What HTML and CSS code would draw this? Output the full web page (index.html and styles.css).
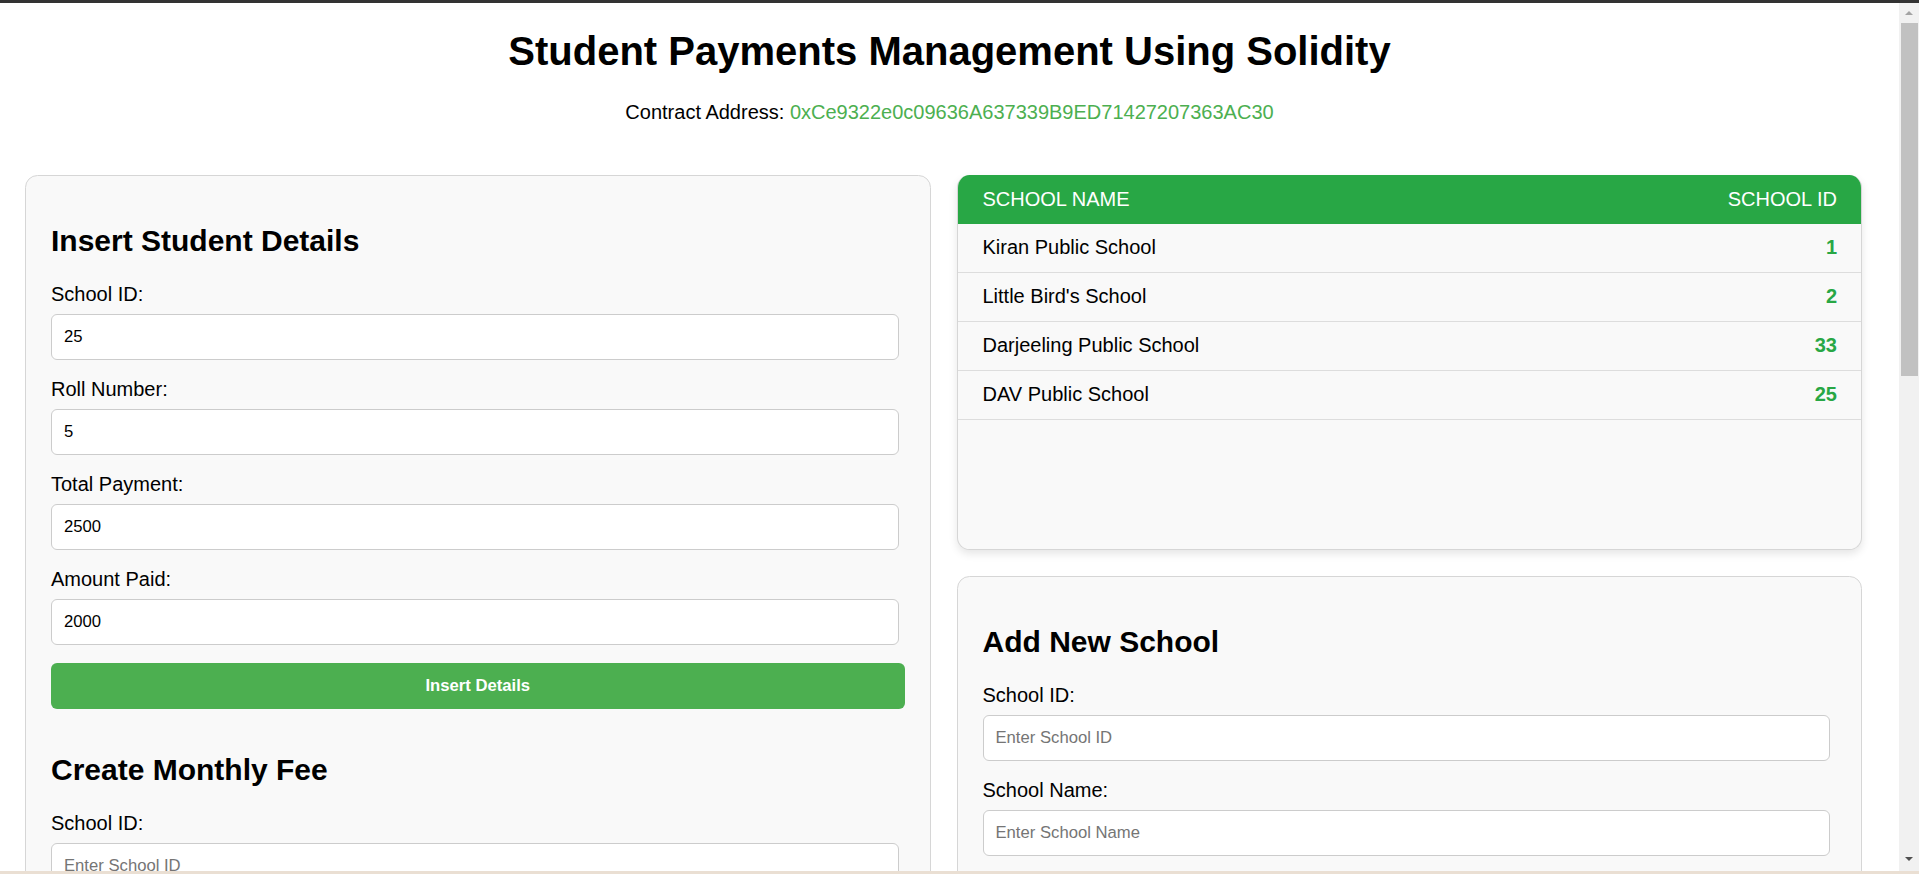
FILE: index.html
```html
<!DOCTYPE html>
<html lang="en">
<head>
<meta charset="utf-8">
<title>Student Payments Management Using Solidity</title>
<link rel="stylesheet" href="styles.css">
</head>
<body>
<div class="window">
  <div class="frame-top"></div>
  <div class="main-row">
    <div class="viewport">
      <div class="page">
        <header class="header">
          <h1 class="title">Student Payments Management Using Solidity</h1>
          <p class="contract">Contract Address: <span class="addr">0xCe9322e0c09636A637339B9ED71427207363AC30</span></p>
        </header>
        <main class="columns">
          <section class="card">
            <div class="form-block">
              <h2 class="card-title">Insert Student Details</h2>
              <label class="field-label">School ID:</label>
              <input class="field" type="text" value="25">
              <label class="field-label">Roll Number:</label>
              <input class="field" type="text" value="5">
              <label class="field-label">Total Payment:</label>
              <input class="field" type="text" value="2500">
              <label class="field-label">Amount Paid:</label>
              <input class="field" type="text" value="2000">
              <button class="btn" type="button">Insert Details</button>
            </div>
            <div class="form-block">
              <h2 class="card-title">Create Monthly Fee</h2>
              <label class="field-label">School ID:</label>
              <input class="field" type="text" placeholder="Enter School ID">
              <label class="field-label">Roll Number:</label>
              <input class="field" type="text" placeholder="Enter Roll Number">
              <label class="field-label">Month:</label>
              <input class="field" type="text" placeholder="Enter Month">
              <label class="field-label">Amount:</label>
              <input class="field" type="text" placeholder="Enter Amount">
              <button class="btn" type="button">Create Fee</button>
            </div>
          </section>
          <div class="side">
            <div class="table-wrap">
              <table class="schools">
                <thead>
                  <tr><th class="col-name">SCHOOL NAME</th><th class="col-id">SCHOOL ID</th></tr>
                </thead>
                <tbody>
                  <tr><td class="col-name">Kiran Public School</td><td class="col-id">1</td></tr>
                  <tr><td class="col-name">Little Bird's School</td><td class="col-id">2</td></tr>
                  <tr><td class="col-name">Darjeeling Public School</td><td class="col-id">33</td></tr>
                  <tr><td class="col-name">DAV Public School</td><td class="col-id">25</td></tr>
                </tbody>
              </table>
            </div>
            <section class="card">
              <div class="form-block">
                <h2 class="card-title">Add New School</h2>
                <label class="field-label">School ID:</label>
                <input class="field" type="text" placeholder="Enter School ID">
                <label class="field-label">School Name:</label>
                <input class="field" type="text" placeholder="Enter School Name">
                <button class="btn" type="button">Add School</button>
              </div>
            </section>
          </div>
        </main>
      </div>
    </div>
    <div class="scrollbar" aria-hidden="true">
      <div class="sb-btn sb-btn-up"><span class="sb-arrow-up"></span></div>
      <div class="sb-track"><div class="sb-thumb"></div></div>
      <div class="sb-btn sb-btn-down"><span class="sb-arrow-down"></span></div>
    </div>
  </div>
  <div class="frame-bottom"></div>
</div>
</body>
</html>
```

FILE: styles.css
```css
html, body {
  margin: 0;
  height: 100%;
  overflow: hidden;
}

body {
  font-family: "Liberation Sans", Arial, sans-serif;
  font-size: 20px;
  color: #000;
  background: #fff;
}

.window {
  display: flex;
  flex-direction: column;
  height: 100vh;
}

.frame-top {
  flex: none;
  height: 3px;
  background: #333;
}

.frame-bottom {
  flex: none;
  height: 3px;
  background: #eadfd3;
}

.main-row {
  flex: 1;
  min-height: 0;
  display: flex;
}

.viewport {
  flex: 1;
  min-width: 0;
  overflow: hidden;
}

/* browser scrollbar of the captured window */
.scrollbar {
  flex: none;
  width: 20px;
  display: flex;
  flex-direction: column;
  background: #f1f1f1;
}

.sb-btn {
  flex: none;
  height: 20px;
  display: flex;
  justify-content: center;
  align-items: flex-start;
  box-sizing: border-box;
}

.sb-btn-up {
  padding-top: 8px;
}

.sb-btn-down {
  padding-top: 6px;
}

.sb-arrow-up {
  width: 0;
  height: 0;
  border-left: 4.5px solid transparent;
  border-right: 4.5px solid transparent;
  border-bottom: 4.5px solid #a3a3a3;
}

.sb-arrow-down {
  width: 0;
  height: 0;
  border-left: 4.5px solid transparent;
  border-right: 4.5px solid transparent;
  border-top: 4.5px solid #505050;
}

.sb-track {
  flex: 1;
  display: flex;
  flex-direction: column;
}

.sb-thumb {
  height: 353px;
  margin: 0 1px 0 2px;
  background: #c1c1c1;
}

.page {
  box-sizing: border-box;
}

.header {
  text-align: center;
}

.title {
  font-size: 40px;
  font-weight: bold;
  margin: 26px 0 27px;
  line-height: normal;
}

.contract {
  margin: 0 0 51px;
  font-size: 20px;
}

.addr {
  color: #4caf50;
}

.columns {
  display: grid;
  grid-template-columns: 1fr 1fr;
  column-gap: 26px;
  align-items: start;
  padding: 0 37px 0 25px;
}

.side {
  display: flex;
  flex-direction: column;
  gap: 26px;
}

.card {
  background: #f9f9f9;
  border: 1px solid #d6d6d6;
  border-radius: 12.5px;
  padding: 48px 25px 25px;
}

.form-block {
  display: flex;
  flex-direction: column;
  align-items: flex-start;
}

.form-block + .form-block {
  margin-top: 43.5px;
}

.card-title {
  font-size: 30px;
  font-weight: bold;
  margin: 0 0 25px;
  line-height: normal;
}

.field-label {
  display: block;
  font-size: 20px;
  line-height: normal;
  margin-bottom: 8px;
}

.field {
  box-sizing: border-box;
  width: calc(100% - 6px);
  height: 46px;
  margin: 0 0 18px;
  padding: 0 12px;
  border: 1px solid #ccc;
  border-radius: 6px;
  background: #fff;
  font-family: "Liberation Sans", Arial, sans-serif;
  font-size: 16.67px;
  color: #000;
}

.field::placeholder {
  color: #757575;
}

.btn {
  box-sizing: border-box;
  width: 100%;
  height: 46px;
  border: none;
  border-radius: 6px;
  background: #4caf50;
  color: #fff;
  font-family: "Liberation Sans", Arial, sans-serif;
  font-size: 16.67px;
  font-weight: bold;
  cursor: pointer;
}

.table-wrap {
  box-sizing: border-box;
  height: 375px;
  overflow: hidden;
  background: #f9f9f9;
  border: 1px solid #d6d6d6;
  border-top: none;
  border-radius: 12.5px;
  box-shadow: 0 4px 8px rgba(0, 0, 0, 0.1);
}

.schools {
  width: 100%;
  border-collapse: collapse;
}

.schools th {
  background: #28a745;
  color: #fff;
  font-weight: normal;
  font-size: 20px;
  line-height: normal;
  padding: 13px 24px 12.5px 25px;
}

.schools td {
  font-size: 20px;
  line-height: normal;
  padding: 12.5px 24px 12.5px 25px;
  border-bottom: 1px solid #ddd;
}

.schools .col-name {
  text-align: left;
}

.schools .col-id {
  text-align: right;
}

.schools td.col-id {
  color: #28a745;
  font-weight: bold;
}
```
